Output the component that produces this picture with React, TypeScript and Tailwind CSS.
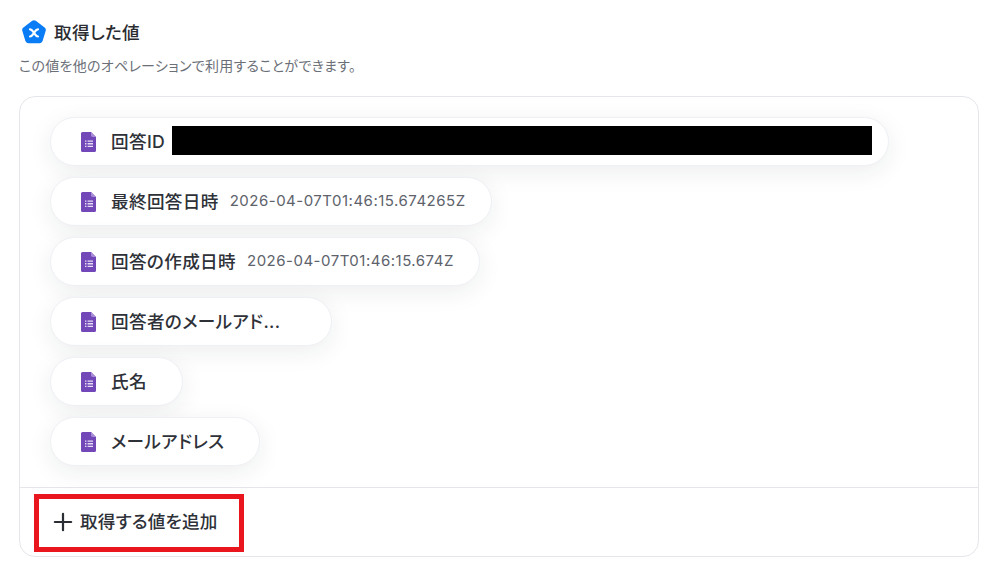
import { Plus } from 'lucide-react'

const rows = [
  { label: '回答ID', value: '', redacted: true },
  { label: '最終回答日時', value: '2026-04-07T01:46:15.674265Z' },
  { label: '回答の作成日時', value: '2026-04-07T01:46:15.674Z' },
  { label: '回答者のメールアド...', value: '', wide: true },
  { label: '氏名', value: '' },
  { label: 'メールアドレス', value: '' },
]

function FormsIcon() {
  return (
    <svg width="16" height="20" viewBox="0 0 16 20" className="shrink-0">
      <path d="M1.5 0H10l5 5v13.5a1.5 1.5 0 0 1-1.5 1.5h-12A1.5 1.5 0 0 1 0 18.5v-17A1.5 1.5 0 0 1 1.5 0Z" fill="#7248b9" />
      <path d="M10 0l5 5h-3.6A1.4 1.4 0 0 1 10 3.6Z" fill="#a88bd6" />
      <path d="M4 8.5h1.4v1.3H4Zm2.6 0H12v1.3H6.6ZM4 11.1h1.4v1.3H4Zm2.6 0H12v1.3H6.6ZM4 13.7h1.4V15H4Zm2.6 0H12V15H6.6Z" fill="#e6dcf5" />
    </svg>
  )
}

function PentagonLogo() {
  return (
    <svg width="26" height="25" viewBox="0 0 26 25" className="shrink-0">
      <path d="M11.2 0.8a3 3 0 0 1 3.6 0l8.8 6.6a3 3 0 0 1 1.1 3.3l-3.1 10.4a3 3 0 0 1-2.9 2.1H7.3a3 3 0 0 1-2.9-2.1L1.3 10.7a3 3 0 0 1 1.1-3.3Z" fill="#0a7cf5" />
      <path d="M9 9.3c1.9 0 2.3 1.1 4 3.6s2.1 3.6 4 3.6M17 9.3c-1.9 0-2.3 1.1-4 3.6s-2.1 3.6-4 3.6" fill="none" stroke="#fff" strokeWidth="2.2" strokeLinecap="round" />
    </svg>
  )
}

export default function App() {
  return (
    <div className="h-[565px] w-[997px] overflow-hidden bg-white pt-[19px] pl-[19px] pr-[18px] font-['Inter','Noto_Sans_CJK_JP',sans-serif] text-[#2e3138] [font-feature-settings:'palt']">
      <div className="flex h-[27px] items-center gap-[7px] pl-[2px]">
        <PentagonLogo />
        <h1 className="translate-y-[1px] text-[17.6px] font-medium tracking-[0.3px] text-[#2a2c31]">取得した値</h1>
      </div>
      <p className="mt-[10px] text-[14px] leading-[20px] tracking-[0.3px] text-[#6b7078]">この値を他のオペレーションで利用することができます。</p>

      <div className="relative mt-[20px] h-[461px] rounded-[16px] border border-[#e4e6ea]">
        <div className="flex h-[390px] flex-col items-start gap-[11px] pt-[20px] pl-[30px]">
          {rows.map((row) => (
            <div
              key={row.label}
              className={`flex h-[49px] items-center rounded-full border border-[#eef0f4] bg-white pl-[30px] shadow-[0_6px_24px_rgba(30,35,50,0.08)] ${row.redacted ? 'pr-[16px]' : row.value ? 'pr-[25px]' : 'pr-[35px]'} ${row.wide ? 'w-[282px]' : ''}`}
            >
              <FormsIcon />
              <span className="ml-[14px] text-[17.6px] leading-none font-medium tracking-[0.35px] whitespace-nowrap text-[#2e3138]">{row.label}</span>
              {row.redacted && <span className="mb-[2px] ml-[7px] h-[29px] w-[700px] bg-black" />}
              {row.value && (
                <span className="ml-[11px] text-[15px] tracking-[0.5px] whitespace-nowrap text-[#5d626b]">{row.value}</span>
              )}
            </div>
          ))}
        </div>

        <div className="flex h-[69px] items-center gap-[3px] border-t border-[#e4e6ea] pl-[29px]">
          <Plus size={28} strokeWidth={1.9} className="text-[#2a2d33]" />
          <span className="text-[17.6px] font-medium tracking-[0.2px] text-[#2e3138]">取得する値を追加</span>
        </div>

        <div className="absolute top-[397px] left-[14px] h-[58px] w-[210px] border-[5px] border-[#e9171d]" />
      </div>
    </div>
  )
}
